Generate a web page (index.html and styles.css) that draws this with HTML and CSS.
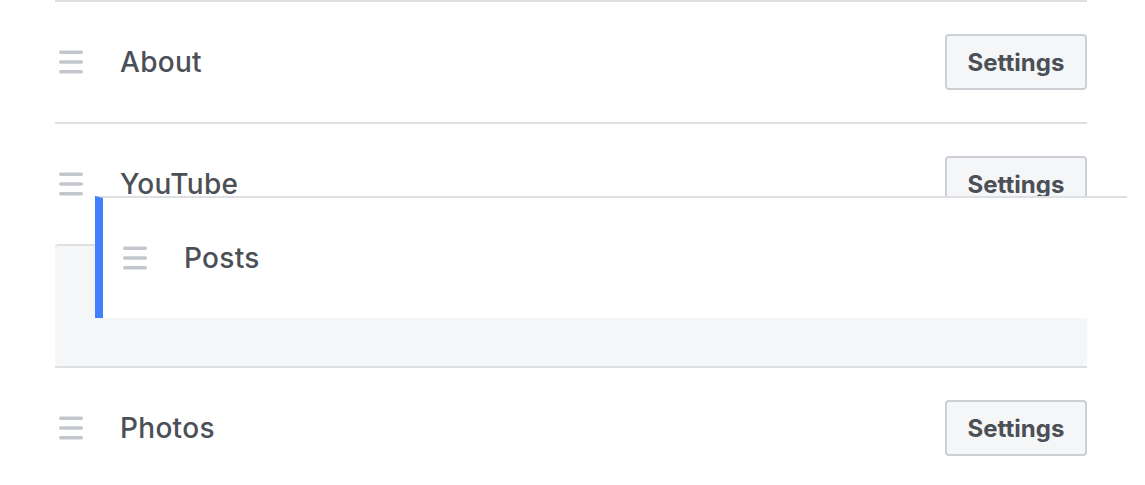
FILE: index.html
```html
<!DOCTYPE html>
<html lang="en">
<head>
<meta charset="utf-8">
<title>Tabs</title>
<link rel="stylesheet" href="styles.css">
</head>
<body>
<div class="stage">
  <ul class="tab-list">
    <li class="tab-row">
      <span class="handle"><svg viewBox="0 0 24 24" width="24" height="24"><rect x="0" y="0.5" width="24" height="3.4" rx="1.7"/><rect x="0" y="10.3" width="24" height="3.4" rx="1.7"/><rect x="0" y="20.1" width="24" height="3.4" rx="1.7"/></svg></span>
      <span class="tab-name">About</span>
      <button class="settings-btn">Settings</button>
    </li>
    <li class="tab-row">
      <span class="handle"><svg viewBox="0 0 24 24" width="24" height="24"><rect x="0" y="0.5" width="24" height="3.4" rx="1.7"/><rect x="0" y="10.3" width="24" height="3.4" rx="1.7"/><rect x="0" y="20.1" width="24" height="3.4" rx="1.7"/></svg></span>
      <span class="tab-name">YouTube</span>
      <button class="settings-btn">Settings</button>
    </li>
    <li class="tab-row placeholder"></li>
    <li class="tab-row">
      <span class="handle"><svg viewBox="0 0 24 24" width="24" height="24"><rect x="0" y="0.5" width="24" height="3.4" rx="1.7"/><rect x="0" y="10.3" width="24" height="3.4" rx="1.7"/><rect x="0" y="20.1" width="24" height="3.4" rx="1.7"/></svg></span>
      <span class="tab-name">Photos</span>
      <button class="settings-btn">Settings</button>
    </li>
  </ul>
  <div class="drag-item">
    <span class="handle"><svg viewBox="0 0 24 24" width="24" height="24"><rect x="0" y="0.5" width="24" height="3.4" rx="1.7"/><rect x="0" y="10.3" width="24" height="3.4" rx="1.7"/><rect x="0" y="20.1" width="24" height="3.4" rx="1.7"/></svg></span>
    <span class="tab-name">Posts</span>
  </div>
</div>
</body>
</html>
```

FILE: styles.css
```css
html, body {
  margin: 0;
  padding: 0;
  background: #ffffff;
}

body {
  font-family: Inter, "Liberation Sans", sans-serif;
  color: #4b4f56;
}

.stage {
  position: relative;
  height: 485px;
  overflow: hidden;
}

.tab-list {
  list-style: none;
  margin: 0 0 0 55px;
  padding: 0;
  width: 1032px;
}

.tab-row {
  display: flex;
  align-items: center;
  height: 120px;
  border-top: 2px solid #dddfe2;
  padding-left: 4px;
}

.placeholder {
  background: #f5f6f7;
  border-radius: 4px;
}

.handle {
  display: flex;
  width: 24px;
  height: 24px;
  flex: none;
}

.handle svg {
  fill: #c3c7cd;
}

.tab-name {
  margin-left: 37px;
  font-size: 28px;
  font-weight: 500;
  letter-spacing: 0.3px;
  flex: 1;
}

.settings-btn {
  width: 142px;
  height: 56px;
  border: 2px solid #ccd0d5;
  border-radius: 4px;
  background: #f5f6f7;
  color: #4b4f56;
  font-family: Inter, "Liberation Sans", sans-serif;
  font-size: 24px;
  font-weight: 700;
  padding: 0;
}

.drag-item {
  position: absolute;
  left: 95px;
  top: 196px;
  width: 1032px;
  height: 122px;
  box-sizing: border-box;
  background: #ffffff;
  border-top: 2px solid #dddfe2;
  border-left: 8px solid #4080ff;
  display: flex;
  align-items: center;
  padding-left: 20px;
}
```
